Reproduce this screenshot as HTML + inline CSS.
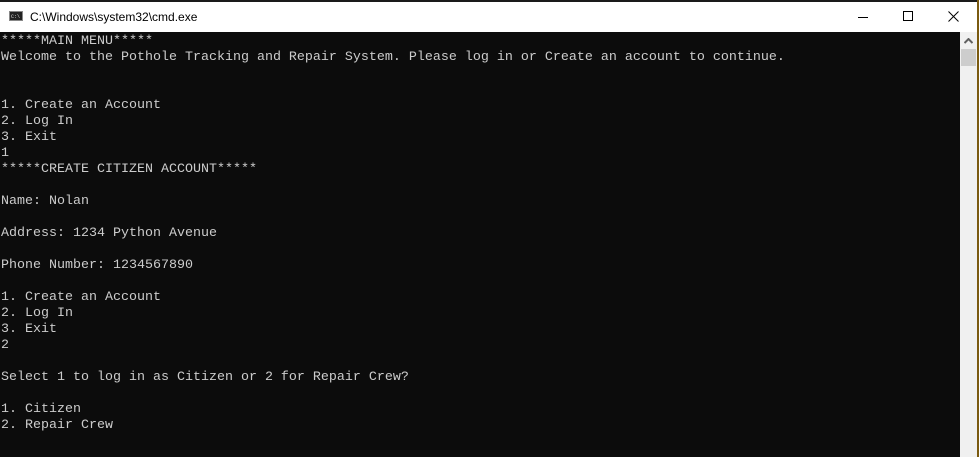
<!DOCTYPE html>
<html><head><style>
body{margin:0;width:979px;height:457px;overflow:hidden;background:#0c0c0c;position:relative}
#tb{position:absolute;left:0;top:2px;width:977px;height:30px;background:#fff;font-family:"Liberation Sans",sans-serif;font-size:12px;color:#000}
#top{position:absolute;left:0;top:0;width:979px;height:2px;background:#1a1a1a}
#rb{position:absolute;right:0;top:0;width:2px;height:457px;background:#7a5a10}
#con{position:absolute;left:1px;top:34px;margin:0;font-family:"Liberation Mono",monospace;font-size:13.33px;line-height:16px;color:#cccccc;white-space:pre}
#sb{position:absolute;left:960px;top:32px;width:17px;height:425px;background:#f0f0f0}
#th{position:absolute;left:961px;top:49px;width:15px;height:17px;background:#cdcdcd}
</style></head><body>
<div id="top"></div>
<div id="tb">
<div style="position:absolute;left:9px;top:9px;width:14px;height:10px;background:#222;border:1px solid #888;box-sizing:border-box"><div style="position:absolute;left:1px;top:2px;font-size:5px;color:#ddd;font-family:'Liberation Mono'">C:\</div></div>
<div style="position:absolute;left:30px;top:8px">C:\Windows\system32\cmd.exe</div>
<div style="position:absolute;left:858px;top:15px;width:10px;height:1px;background:#000"></div>
<div style="position:absolute;left:903px;top:9px;width:10px;height:10px;border:1px solid #000;box-sizing:border-box"></div>
<svg style="position:absolute;left:948px;top:9px" width="11" height="11"><path d="M0.5 0.5L10.5 10.5M10.5 0.5L0.5 10.5" stroke="#000" stroke-width="1"/></svg>
</div>
<pre id="con">*****MAIN MENU*****
Welcome to the Pothole Tracking and Repair System. Please log in or Create an account to continue.


1. Create an Account
2. Log In
3. Exit
1
*****CREATE CITIZEN ACCOUNT*****

Name: Nolan

Address: 1234 Python Avenue

Phone Number: 1234567890

1. Create an Account
2. Log In
3. Exit
2

Select 1 to log in as Citizen or 2 for Repair Crew?

1. Citizen
2. Repair Crew</pre>
<div id="sb"><svg style="position:absolute;left:4px;top:6px" width="9" height="6"><path d="M0.5 5L4.5 1L8.5 5" stroke="#606060" stroke-width="2" fill="none"/></svg></div>
<div id="th"></div>
<div id="rb"></div>
</body></html>
